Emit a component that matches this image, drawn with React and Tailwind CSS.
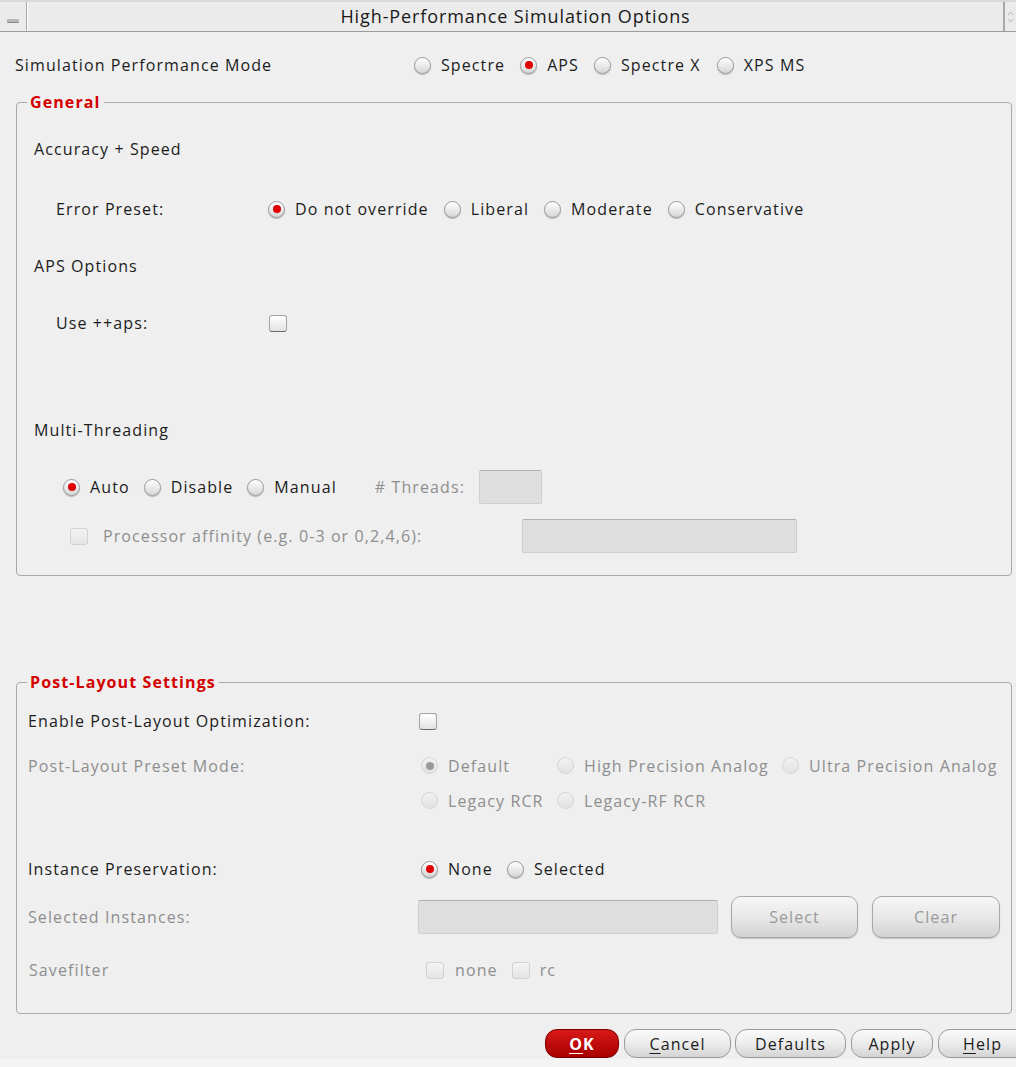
import React from "react";

function Radio({ checked = false, disabled = false }) {
  return (
    <span
      className={
        "relative inline-flex h-[17px] w-[17px] shrink-0 items-center justify-center rounded-full border " +
        (disabled
          ? "border-[#d4d4d4] bg-gradient-to-b from-[#f2f2f2] to-[#e2e2e2]"
          : "border-[#9a9a9a] bg-gradient-to-b from-[#ffffff] to-[#d6d6d6] shadow-[0_1px_1px_rgba(0,0,0,0.25)]")
      }
    >
      {checked && (
        <span
          className={
            "h-[8px] w-[8px] rounded-full " +
            (disabled ? "bg-[#9a9a9a]" : "bg-[#e00000]")
          }
        />
      )}
    </span>
  );
}

function Check({ disabled = false }) {
  return (
    <span
      className={
        "inline-block h-[17px] w-[18px] shrink-0 rounded-[3px] border " +
        (disabled
          ? "border-[#d2d2d2] bg-gradient-to-b from-[#f4f4f4] to-[#e4e4e4]"
          : "border-[#a4a4a4] border-b-[#6a6a6a] bg-gradient-to-b from-[#ffffff] to-[#e2e2e2]")
      }
    />
  );
}

function RadioItem({ label, checked, disabled, className = "" }) {
  return (
    <span className={"flex items-center gap-[10px] " + className}>
      <Radio checked={checked} disabled={disabled} />
      <span className={disabled ? "text-[#8e8e8e]" : "text-[#1c1c1c]"}>{label}</span>
    </span>
  );
}

function Group({ title, className = "", children }) {
  return (
    <div className={"relative ml-[16px] mr-[4px] rounded-[4px] border border-[#a9a9a9] " + className}>
      <div className="absolute left-[10px] top-[-12px] bg-[#efefef] px-[3px] text-[16px] font-bold leading-[22px] text-[#d40000]">
        {title}
      </div>
      {children}
    </div>
  );
}

function Btn({ children, red = false, className = "" }) {
  return (
    <button
      className={
        "flex h-[29px] shrink-0 items-center justify-center rounded-[12px] border text-[16px] tracking-[1.1px] " +
        (red
          ? "border-[#7a0000] bg-gradient-to-b from-[#d81818] to-[#a80000] font-bold text-white"
          : "border-[#9a9a9a] bg-gradient-to-b from-[#fafafa] via-[#ececec] to-[#d4d4d4] text-[#1c1c1c]") +
        " " +
        className
      }
    >
      {children}
    </button>
  );
}

export default function App() {
  return (
    <div
      className="relative h-[1067px] w-[1016px] overflow-hidden bg-[#efefef] text-[16px] tracking-[1.1px] text-[#1c1c1c]"
      style={{ fontFamily: "'Open Sans', 'DejaVu Sans', sans-serif" }}
    >
      {/* title bar */}
      <div className="flex h-[32px] border-t-[2px] border-b border-t-[#d8d8d8] border-b-[#9c9c9c] bg-[#ebebeb]">
        <div className="flex w-[27px] items-end justify-center border-r border-[#a8a8a8] pb-[9px]">
          <span className="block h-[3px] w-[12px] rounded-[1px] bg-[#b8b8b8] shadow-[0_1px_0_#888]" />
        </div>
        <div className="flex flex-1 items-center justify-center border-l border-[#ffffff] text-[18px] tracking-[0.9px] text-[#1a1a1a]">
          High-Performance Simulation Options
        </div>
        <div className="flex w-[13px] items-center justify-center border-l-[2px] border-[#a8a8a8]">
          <svg width="7" height="14" viewBox="0 0 7 14" fill="none" stroke="#b4b4b4" strokeWidth="1">
            <path d="M1 5 L3.5 2 L6 5" />
            <path d="M1 9 L3.5 12 L6 9" />
          </svg>
        </div>
      </div>

      {/* mode row */}
      <div className="mt-[15px] flex h-[36px] items-center">
        <div className="w-[414px] pl-[15px]">Simulation Performance Mode</div>
        <RadioItem label="Spectre" />
        <RadioItem label="APS" checked className="ml-[15px]" />
        <RadioItem label="Spectre X" className="ml-[15px]" />
        <RadioItem label="XPS MS" className="ml-[16px]" />
      </div>

      {/* General */}
      <Group title="General" className="mt-[19px] h-[474px]">
        <div className="ml-[17px] mt-[28px] flex h-[36px] items-center">Accuracy + Speed</div>
        <div className="mt-[24px] flex h-[36px] items-center">
          <div className="w-[251px] pl-[39px]">Error Preset:</div>
          <RadioItem label="Do not override" checked />
          <RadioItem label="Liberal" className="ml-[15px]" />
          <RadioItem label="Moderate" className="ml-[15px]" />
          <RadioItem label="Conservative" className="ml-[15px]" />
        </div>
        <div className="ml-[17px] mt-[21px] flex h-[36px] items-center">APS Options</div>
        <div className="mt-[21px] flex h-[36px] items-center">
          <div className="w-[252px] pl-[39px]">Use ++aps:</div>
          <Check />
        </div>
        <div className="ml-[17px] mt-[71px] flex h-[36px] items-center">Multi-Threading</div>
        <div className="mt-[21px] flex h-[36px] items-center pl-[46px]">
          <RadioItem label="Auto" checked />
          <RadioItem label="Disable" className="ml-[14px]" />
          <RadioItem label="Manual" className="ml-[14px]" />
          <span className="ml-[38px] text-[#8e8e8e]">#&nbsp;Threads:</span>
          <span className="ml-[14px] h-[34px] w-[63px] rounded-[2px] border border-[#cfcfcf] border-t-[#b0b0b0] bg-[#dedede]" />
        </div>
        <div className="mt-[13px] flex h-[36px] items-center pl-[53px]">
          <Check disabled />
          <span className="ml-[15px] w-[419px] text-[#8e8e8e]">Processor affinity (e.g. 0-3 or 0,2,4,6):</span>
          <span className="h-[34px] w-[275px] rounded-[2px] border border-[#cfcfcf] border-t-[#b0b0b0] bg-[#dedede]" />
        </div>
      </Group>

      {/* Post-Layout */}
      <Group title="Post-Layout Settings" className="mt-[106px] h-[332px]">
        <div className="mt-[20px] flex h-[36px] items-center">
          <div className="w-[402px] pl-[11px]">Enable Post-Layout Optimization:</div>
          <Check />
        </div>
        <div className="mt-[9px] flex">
          <div className="flex h-[35px] w-[404px] items-center pl-[11px] text-[#8e8e8e]">Post-Layout Preset Mode:</div>
          <div className="flex flex-col">
            <div className="flex h-[35px] items-center">
              <RadioItem label="Default" checked disabled className="w-[136px]" />
              <RadioItem label="High Precision Analog" disabled className="w-[225px]" />
              <RadioItem label="Ultra Precision Analog" disabled />
            </div>
            <div className="flex h-[35px] items-center">
              <RadioItem label="Legacy RCR" disabled className="w-[136px]" />
              <RadioItem label="Legacy-RF RCR" disabled />
            </div>
          </div>
        </div>
        <div className="mt-[33px] flex h-[36px] items-center">
          <div className="w-[404px] pl-[11px]">Instance Preservation:</div>
          <RadioItem label="None" checked />
          <RadioItem label="Selected" className="ml-[14px]" />
        </div>
        <div className="mt-[9px] flex h-[42px] items-center">
          <div className="w-[401px] pl-[11px] text-[#8e8e8e]">Selected Instances:</div>
          <span className="h-[34px] w-[300px] rounded-[2px] border border-[#cfcfcf] border-t-[#b0b0b0] bg-[#dedede]" />
          <button className="ml-[13px] h-[42px] w-[127px] rounded-[10px] border border-[#a8a8a8] bg-gradient-to-b from-[#f6f6f6] via-[#e8e8e8] to-[#d2d2d2] text-[16px] tracking-[1.1px] text-[#9a9a9a] shadow-[0_1px_1px_rgba(0,0,0,0.2)]">
            Select
          </button>
          <button className="ml-[14px] h-[42px] w-[128px] rounded-[10px] border border-[#a8a8a8] bg-gradient-to-b from-[#f6f6f6] via-[#e8e8e8] to-[#d2d2d2] text-[16px] tracking-[1.1px] text-[#9a9a9a] shadow-[0_1px_1px_rgba(0,0,0,0.2)]">
            Clear
          </button>
        </div>
        <div className="mt-[14px] flex h-[36px] items-center">
          <div className="w-[409px] pl-[12px] text-[#8e8e8e]">Savefilter</div>
          <Check disabled />
          <span className="ml-[11px] text-[#8e8e8e]">none</span>
          <span className="ml-[14px] flex"><Check disabled /></span>
          <span className="ml-[10px] text-[#8e8e8e]">rc</span>
        </div>
      </Group>

      {/* bottom buttons */}
      <div className="mt-[15px] flex h-[29px] items-center pl-[545px]">
        <Btn red className="w-[74px]">
          <span className="underline underline-offset-[3px]">O</span>K
        </Btn>
        <Btn className="ml-[5px] w-[107px]">
          <span className="underline underline-offset-[3px]">C</span>ancel
        </Btn>
        <Btn className="ml-[4px] w-[111px]">Defaults</Btn>
        <Btn className="ml-[5px] w-[82px]">Apply</Btn>
        <Btn className="ml-[5px] w-[90px] justify-start pl-[24px]">
          <span className="underline underline-offset-[3px]">H</span>elp
        </Btn>
      </div>
      <div className="absolute bottom-0 left-0 right-0 h-[8px] bg-[#f4f4f4]" />
    </div>
  );
}
